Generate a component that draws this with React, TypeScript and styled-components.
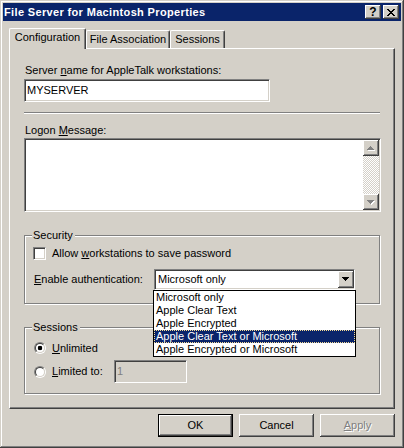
import React from 'react'
import styled, { createGlobalStyle, css } from 'styled-components'

const GlobalStyle = createGlobalStyle`
  html, body {
    margin: 0;
    padding: 0;
    background: #d4d0c8;
  }
  body {
    font-family: 'Liberation Sans', Arial, sans-serif;
    font-size: 11px;
    color: #000;
  }
`

/* classic 3d edges */
const raised = css`
  box-sizing: border-box;
  background: #d4d0c8;
  box-shadow: inset -1px -1px #404040, inset 1px 1px #fff, inset -2px -2px #808080, inset 2px 2px #d4d0c8;
`

const sunken = css`
  box-sizing: border-box;
  border: 1px solid;
  border-color: #808080 #fff #fff #808080;
  box-shadow: inset 1px 1px #404040, inset -1px -1px #d4d0c8;
`

const Window = styled.div`
  width: 404px;
  height: 448px;
  box-sizing: border-box;
  padding: 3px;
  background: #d4d0c8;
  box-shadow: inset -1px -1px #404040, inset 1px 1px #d4d0c8, inset -2px -2px #808080, inset 2px 2px #fff;
  display: flex;
  flex-direction: column;
`

const TitleBar = styled.div`
  height: 18px;
  flex-shrink: 0;
  background: #0a246a;
  color: #fff;
  font-weight: bold;
  display: flex;
  align-items: center;
  padding: 0 2px 0 1px;
`

const Title = styled.span`
  flex: 1;
  line-height: 13px;
  letter-spacing: 0.35px;
  white-space: nowrap;
`

const CaptionButton = styled.div`
  ${raised};
  width: 16px;
  height: 14px;
  display: flex;
  align-items: center;
  justify-content: center;
  color: #000;
  font-size: 12px;
  font-weight: bold;
  line-height: 12px;
  & + & {
    margin-left: 2px;
  }
`

const Body = styled.div`
  display: flex;
  flex-direction: column;
  padding: 7px 0 0 6px;
`

const TabStrip = styled.div`
  display: flex;
  align-items: flex-end;
  height: 20px;
  position: relative;
  z-index: 2;
`

const Tab = styled.div<{ $active?: boolean; $w: number }>`
  width: ${p => p.$w}px;
  height: ${p => (p.$active ? 21 : 18)}px;
  margin-bottom: ${p => (p.$active ? -1 : 0)}px;
  box-sizing: border-box;
  background: #d4d0c8;
  border-left: 1px solid #fff;
  border-top: 1px solid #fff;
  border-right: 1px solid #404040;
  border-radius: 2px 2px 0 0;
  box-shadow: inset -1px 0 #808080;
  padding-top: 2px;
  display: flex;
  justify-content: center;
  line-height: 13px;
  white-space: nowrap;
`

const Panel = styled.div`
  width: 386px;
  height: 361px;
  box-sizing: border-box;
  border-left: 1px solid #fff;
  border-top: 1px solid #fff;
  border-right: 1px solid #404040;
  border-bottom: 1px solid #404040;
  box-shadow: inset -1px -1px #808080;
  padding: 15px 0 0 14px;
  display: flex;
  flex-direction: column;
  align-items: flex-start;
`

const Label = styled.div<{ $gap?: number }>`
  line-height: 13px;
  margin-top: ${p => p.$gap || 0}px;
  padding-left: 1px;
  white-space: nowrap;
`

const TextBox = styled.div<{ $w: number; $disabled?: boolean }>`
  ${sunken};
  width: ${p => p.$w}px;
  height: 23px;
  background: ${p => (p.$disabled ? '#d4d0c8' : '#fff')};
  color: ${p => (p.$disabled ? '#808080' : '#000')};
  display: flex;
  align-items: center;
  padding: 0 0 1px 2px;
  line-height: 13px;
`

const Separator = styled.div`
  width: 356px;
  margin-top: 10px;
  border-top: 1px solid #808080;
  border-bottom: 1px solid #fff;
`

const Memo = styled.div`
  ${sunken};
  width: 357px;
  height: 74px;
  margin-top: 1px;
  background: #fff;
  display: flex;
  justify-content: flex-end;
  padding: 1px;
`

const ScrollBar = styled.div`
  width: 16px;
  display: flex;
  flex-direction: column;
`

const ScrollButton = styled.div`
  ${raised};
  width: 16px;
  height: 16px;
  display: flex;
  align-items: center;
  justify-content: center;
`

const ScrollTrack = styled.div`
  flex: 1;
  background: repeating-conic-gradient(#fff 0 25%, #d4d0c8 0 50%) 0 0 / 2px 2px;
`

const Group = styled.div<{ $h: number; $gap: number; $top: number }>`
  position: relative;
  width: 356px;
  height: ${p => p.$h}px;
  margin-top: ${p => p.$gap}px;
  box-sizing: border-box;
  border: 1px solid #808080;
  box-shadow: inset 1px 1px #fff, 1px 1px #fff;
  padding: ${p => p.$top}px 0 0 8px;
  display: flex;
  flex-direction: column;
`

const Legend = styled.span`
  position: absolute;
  top: -7px;
  left: 7px;
  padding: 0 2px 0 1px;
  background: #d4d0c8;
  line-height: 13px;
`

const Row = styled.div<{ $h: number; $gap?: number }>`
  display: flex;
  align-items: center;
  height: ${p => p.$h}px;
  margin-top: ${p => p.$gap || 0}px;
  line-height: 13px;
  white-space: nowrap;
`

const CheckBox = styled.span`
  ${sunken};
  width: 13px;
  height: 13px;
  background: #fff;
  margin-right: 5px;
  flex-shrink: 0;
`

const RadioOuter = styled.span`
  width: 12px;
  height: 12px;
  box-sizing: border-box;
  border-radius: 50%;
  border: 1px solid;
  border-color: #808080 #fff #fff #808080;
  margin: 0 5px 0 1px;
  display: flex;
  flex-shrink: 0;
`

const RadioInner = styled.span<{ $checked?: boolean }>`
  flex: 1;
  box-sizing: border-box;
  border-radius: 50%;
  border: 1px solid;
  border-color: #404040 #d4d0c8 #d4d0c8 #404040;
  background: ${p => (p.$checked ? 'radial-gradient(circle, #000 0 2px, #fff 2.6px)' : '#fff')};
`

const FieldLabel = styled.span<{ $w?: number }>`
  width: ${p => (p.$w ? `${p.$w}px` : 'auto')};
  padding-left: 1px;
  box-sizing: border-box;
  flex-shrink: 0;
`

const ComboWrap = styled.div`
  position: relative;
  width: 201px;
  height: 21px;
`

const Combo = styled.div`
  ${sunken};
  height: 100%;
  background: #fff;
  display: flex;
  align-items: center;
  padding: 0 0 0 3px;
`

const DropButton = styled.div`
  ${raised};
  margin-left: auto;
  width: 16px;
  height: 17px;
  display: flex;
  align-items: center;
  justify-content: center;
`

const List = styled.ul`
  position: absolute;
  top: 100%;
  left: -1px;
  width: 203px;
  margin: 0;
  padding: 0;
  list-style: none;
  box-sizing: border-box;
  border: 1px solid #000;
  background: #fff;
  z-index: 5;
`

const Item = styled.li<{ $selected?: boolean }>`
  height: 13px;
  line-height: 13px;
  padding-left: 2px;
  white-space: nowrap;
  ${p =>
    p.$selected &&
    css`
      background: #0a246a;
      color: #fff;
      outline: 1px dotted #f5db95;
      outline-offset: -1px;
    `}
`

const Footer = styled.div`
  width: 386px;
  margin-top: 5px;
  display: flex;
  justify-content: flex-end;
  gap: 6px;
`

const Button = styled.div<{ $default?: boolean; $disabled?: boolean }>`
  ${raised};
  width: 75px;
  height: 23px;
  display: flex;
  align-items: center;
  justify-content: center;
  line-height: 13px;
  color: ${p => (p.$disabled ? '#808080' : '#000')};
  text-shadow: ${p => (p.$disabled ? '1px 1px #fff' : 'none')};
  ${p =>
    p.$default &&
    css`
      border: 1px solid #000;
    `}
`

/* small pixel triangles used on scroll and drop buttons */
function Arrow({ up, color, shadow }: { up?: boolean; color: string; shadow?: boolean }) {
  const rows = [7, 5, 3, 1]
  const pix = (dx: number, dy: number, fill: string) =>
    rows.map((w, i) => {
      const y = up ? 3 - i : i
      return <rect key={fill + i} x={(7 - w) / 2 + dx} y={y + dy} width={w} height={1} fill={fill} />
    })
  return (
    <svg width="8" height="5" viewBox="0 0 8 5" shapeRendering="crispEdges">
      {shadow && pix(1, 1, '#fff')}
      {pix(0, 0, color)}
    </svg>
  )
}

function CloseGlyph() {
  const rows = [
    [0, 1, 6, 7],
    [1, 2, 5, 6],
    [2, 3, 4, 5],
    [3, 4],
    [2, 3, 4, 5],
    [1, 2, 5, 6],
    [0, 1, 6, 7],
  ]
  return (
    <svg width="8" height="7" viewBox="0 0 8 7" shapeRendering="crispEdges">
      {rows.map((xs, y) => xs.map(x => <rect key={`${x}-${y}`} x={x} y={y} width={1} height={1} fill="#000" />))}
    </svg>
  )
}

const authOptions = [
  'Microsoft only',
  'Apple Clear Text',
  'Apple Encrypted',
  'Apple Clear Text or Microsoft',
  'Apple Encrypted or Microsoft',
]

export default function App() {
  return (
    <>
      <GlobalStyle />
      <Window>
        <TitleBar>
          <Title>File Server for Macintosh Properties</Title>
          <CaptionButton>?</CaptionButton>
          <CaptionButton>
            <CloseGlyph />
          </CaptionButton>
        </TitleBar>

        <Body>
          <TabStrip>
            <Tab $active $w={77}>Configuration</Tab>
            <Tab $w={84}>File Association</Tab>
            <Tab $w={55}>Sessions</Tab>
          </TabStrip>

          <Panel>
            <Label>
              Server <u>n</u>ame for AppleTalk workstations:
            </Label>
            <TextBox $w={246} style={{ marginTop: 2 }}>
              MYSERVER
            </TextBox>

            <Separator />

            <Label $gap={10}>
              Logon <u>M</u>essage:
            </Label>
            <Memo>
              <ScrollBar>
                <ScrollButton>
                  <Arrow up color="#808080" shadow />
                </ScrollButton>
                <ScrollTrack />
                <ScrollButton>
                  <Arrow color="#808080" shadow />
                </ScrollButton>
              </ScrollBar>
            </Memo>

            <Group $h={69} $gap={23} $top={11}>
              <Legend>Security</Legend>
              <Row $h={13}>
                <CheckBox />
                <FieldLabel>
                  Allow <u>w</u>orkstations to save password
                </FieldLabel>
              </Row>
              <Row $h={21} $gap={9}>
                <FieldLabel $w={121}>
                  <u>E</u>nable authentication:
                </FieldLabel>
                <ComboWrap>
                  <Combo>
                    Microsoft only
                    <DropButton>
                      <Arrow color="#000" />
                    </DropButton>
                  </Combo>
                  <List>
                    {authOptions.map((o, i) => (
                      <Item key={o} $selected={i === 3}>
                        {o}
                      </Item>
                    ))}
                  </List>
                </ComboWrap>
              </Row>
            </Group>

            <Group $h={67} $gap={23} $top={14}>
              <Legend>Sessions</Legend>
              <Row $h={12}>
                <RadioOuter>
                  <RadioInner $checked />
                </RadioOuter>
                <FieldLabel>
                  <u>U</u>nlimited
                </FieldLabel>
              </Row>
              <Row $h={23} $gap={6}>
                <RadioOuter>
                  <RadioInner />
                </RadioOuter>
                <FieldLabel $w={63}>
                  <u>L</u>imited to:
                </FieldLabel>
                <TextBox $w={73} $disabled>
                  1
                </TextBox>
              </Row>
            </Group>
          </Panel>

          <Footer>
            <Button $default>OK</Button>
            <Button>Cancel</Button>
            <Button $disabled>
              <span>
                <u>A</u>pply
              </span>
            </Button>
          </Footer>
        </Body>
      </Window>
    </>
  )
}
